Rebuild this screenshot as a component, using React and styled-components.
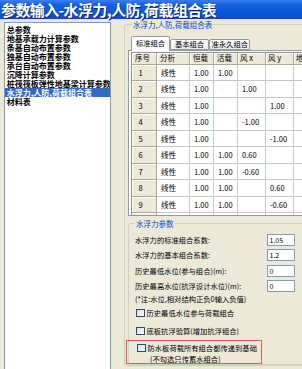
import React from "react";
import styled, { createGlobalStyle } from "styled-components";

const Global = createGlobalStyle`
  html, body { margin: 0; padding: 0; background: #ECE9D8; }
  body { font-family: "Noto Sans CJK SC", "Noto Sans", sans-serif; }
  * { box-sizing: border-box; }
`;

const Window = styled.div`
  width: 302px;
  height: 369px;
  overflow: hidden;
  background: #ECE9D8;
  display: flex;
  flex-direction: column;
`;

const TitleBar = styled.div`
  flex: none;
  height: 19px;
  background: linear-gradient(#3B7EF0 0%, #1461E2 25%, #0A57D8 70%, #0A4CC4 100%);
  color: #fff;
  font-weight: 700;
  font-size: 15px;
  line-height: 19px;
  padding-left: 1px;
  letter-spacing: -0.6px;
  white-space: nowrap;
  text-shadow: 1px 1px 0 #0A246A;
`;

const Body = styled.div`
  flex: 1;
  min-height: 0;
  display: flex;
  align-items: flex-start;
  gap: 13px;
`;

const List = styled.div`
  flex: none;
  margin: 3px 0 0 4px;
  width: 107px;
  height: 360px;
  background: #fff;
  border: 1px solid #7F9DB9;
  padding-top: 1.5px;
  overflow: hidden;
`;

const ListItem = styled.div`
  height: 9.1px;
  line-height: 9.1px;
  font-size: 8px;
  font-weight: 700;
  padding-left: 1.7px;
  white-space: nowrap;
  overflow: hidden;
  color: ${(p) => (p.$selected ? "#fff" : "#000")};
  background: ${(p) => (p.$selected ? "#316AC5" : "transparent")};
`;

const Group = styled.fieldset`
  flex: none;
  margin: 0;
  margin-top: ${(p) => p.$mt || 0}px;
  margin-left: ${(p) => p.$ml || 0}px;
  width: ${(p) => p.$w}px;
  min-width: 0;
  border: 1px solid #D0D0BF;
  border-radius: 3px;
  padding: ${(p) => p.$pad};
`;

const Legend = styled.legend`
  padding: 0 1px;
  margin-left: ${(p) => p.$ml || 0}px;
  font-size: 7.5px;
  line-height: 9px;
  color: #0046D5;
  white-space: nowrap;
`;

const TabStrip = styled.div`
  display: flex;
  align-items: flex-end;
  height: 14px;
  padding-left: 3px;
  position: relative;
  z-index: 1;
`;

const Tab = styled.div`
  height: ${(p) => (p.$active ? 15 : 11.5)}px;
  margin-bottom: ${(p) => (p.$active ? -1 : 0)}px;
  min-width: 39px;
  padding: 0 1.5px;
  border: 1px solid #919B9C;
  border-bottom: ${(p) => (p.$active ? "none" : "1px solid #919B9C")};
  border-radius: 2px 2px 0 0;
  background: ${(p) =>
    p.$active ? "#FCFCFE" : "linear-gradient(#FFFFFF, #ECEBE6)"};
  font-size: 7.3px;
  line-height: ${(p) => (p.$active ? 12 : 9.5)}px;
  text-align: center;
  white-space: nowrap;
  color: #000;
`;

const TabPanel = styled.div`
  height: 166px;
  border: 1px solid #919B9C;
  background: #FCFCFE;
  padding: 1px 0 0 2px;
  overflow: hidden;
`;

const Grid = styled.div`
  display: grid;
  grid-template-columns: 25px 33px 24px 24px 28px 28px 40px;
  grid-template-rows: 11.5px;
  grid-auto-rows: 16.5px;
  border-left: 1px solid #8E8F8F;
  border-top: 1px solid #8E8F8F;
  background: #fff;
  font-size: 7.5px;
  color: #000;
`;

const HeadCell = styled.div`
  background: #ECE9D8;
  border-right: 1px solid #ACA899;
  border-bottom: 1px solid #ACA899;
  box-shadow: inset 1px 1px 0 #fff;
  padding-left: ${(p) => p.$pl ?? 3}px;
  line-height: 10.5px;
  white-space: nowrap;
  overflow: hidden;
`;

const IdxCell = styled(HeadCell)`
  line-height: 15.5px;
  padding-left: 6.5px;
`;

const Cell = styled.div`
  border-right: 1px solid #C8C8C8;
  border-bottom: 1px solid #C8C8C8;
  padding-left: 4px;
  line-height: 15.5px;
  white-space: nowrap;
  overflow: hidden;
`;

const Content = styled.div`
  width: 160px;
  display: flex;
  flex-direction: column;
  font-size: 7.3px;
  color: #000;
`;

const FieldRow = styled.div`
  height: 15.5px;
  display: flex;
  align-items: center;
  justify-content: space-between;
  white-space: nowrap;
`;

const Input = styled.div`
  width: 28.5px;
  height: 12px;
  border: 1px solid #7F9DB9;
  background: #fff;
  padding-left: 2px;
  font-size: 7px;
  line-height: 10px;
`;

const Note = styled.div`
  height: 10px;
  line-height: 10px;
  white-space: nowrap;
`;

const CheckRow = styled.div`
  height: ${(p) => p.$h || 18}px;
  display: flex;
  align-items: center;
  gap: 2px;
  padding-left: 1px;
  white-space: nowrap;
`;

const Box = styled.span`
  flex: none;
  width: 8.5px;
  height: 8.5px;
  border: 1px solid #1C5180;
  background: linear-gradient(135deg, #DCDCD7, #FFFFFF);
`;

const Highlight = styled.div`
  margin-left: -9px;
  width: 136px;
  border: 1px solid #E05A5A;
  padding-left: 9px;
`;

const SubLine = styled.div`
  height: 8px;
  line-height: 8px;
  padding-left: 14px;
  white-space: nowrap;
`;

const listItems = [
  "总参数",
  "地基承载力计算参数",
  "条基自动布置参数",
  "独基自动布置参数",
  "承台自动布置参数",
  "沉降计算参数",
  "桩筏筏板弹性地基梁计算参数(JCCAD)",
  "水浮力,人防,荷载组合表",
  "材料表",
];

const headers = ["序号", "分析", "恒载", "活载", "风 x", "风 y", "地震 x"];

const rows = [
  ["1.00", "1.00", "", ""],
  ["1.00", "", "1.00", ""],
  ["1.00", "", "", "1.00"],
  ["1.00", "", "-1.00", ""],
  ["1.00", "", "", "-1.00"],
  ["1.00", "1.00", "0.60", ""],
  ["1.00", "1.00", "-0.60", ""],
  ["1.00", "1.00", "", "0.60"],
  ["1.00", "1.00", "", "-0.60"],
];

const fields = [
  ["水浮力的标准组合系数:", "1.05"],
  ["水浮力的基本组合系数:", "1.2"],
  ["历史最低水位(参与组合)(m):", "0"],
  ["历史最高水位(抗浮设计水位)(m):", "0"],
];

export default function App() {
  return (
    <>
      <Global />
      <Window>
        <TitleBar>参数输入-水浮力,人防,荷载组合表</TitleBar>
        <Body>
          <List>
            {listItems.map((t, i) => (
              <ListItem key={i} $selected={i === 7}>
                {t}
              </ListItem>
            ))}
          </List>
          <Group $w={200} $mt={1} $pad="7px 0 0 3px">
            <Legend $ml={4}>水浮力,人防,荷载组合表</Legend>
            <TabStrip>
              <Tab $active>标准组合</Tab>
              <Tab>基本组合</Tab>
              <Tab>准永久组合</Tab>
            </TabStrip>
            <TabPanel>
              <Grid>
                {headers.map((h, i) => (
                  <HeadCell key={h} $pl={i >= 4 ? 2 : 3}>
                    {h}
                  </HeadCell>
                ))}
                {rows.map((r, i) => (
                  <React.Fragment key={i}>
                    <IdxCell>{i + 1}</IdxCell>
                    <Cell>线性</Cell>
                    {r.map((v, j) => (
                      <Cell key={j}>{v}</Cell>
                    ))}
                    <Cell />
                  </React.Fragment>
                ))}
                <IdxCell />
                {[0, 1, 2, 3, 4, 5].map((k) => (
                  <Cell key={k} />
                ))}
              </Grid>
            </TabPanel>
            <Group $w={190} $mt={2.5} $pad="4.5px 0 0 6px">
              <Legend>水浮力参数</Legend>
              <Content>
                {fields.map(([l, v]) => (
                  <FieldRow key={l}>
                    <span>{l}</span>
                    <Input>{v}</Input>
                  </FieldRow>
                ))}
                <Note>(*注:水位,相对结构正负0输入负值)</Note>
                <CheckRow>
                  <Box />
                  历史最低水位参与荷载组合
                </CheckRow>
                <CheckRow>
                  <Box />
                  底板抗浮验算(增加抗浮组合)
                </CheckRow>
                <Highlight>
                  <CheckRow $h={14}>
                    <Box />
                    防水板荷载所有组合都传递到基础
                  </CheckRow>
                  <SubLine>(不勾选只传蓄水组合)</SubLine>
                </Highlight>
              </Content>
            </Group>
          </Group>
        </Body>
      </Window>
    </>
  );
}
